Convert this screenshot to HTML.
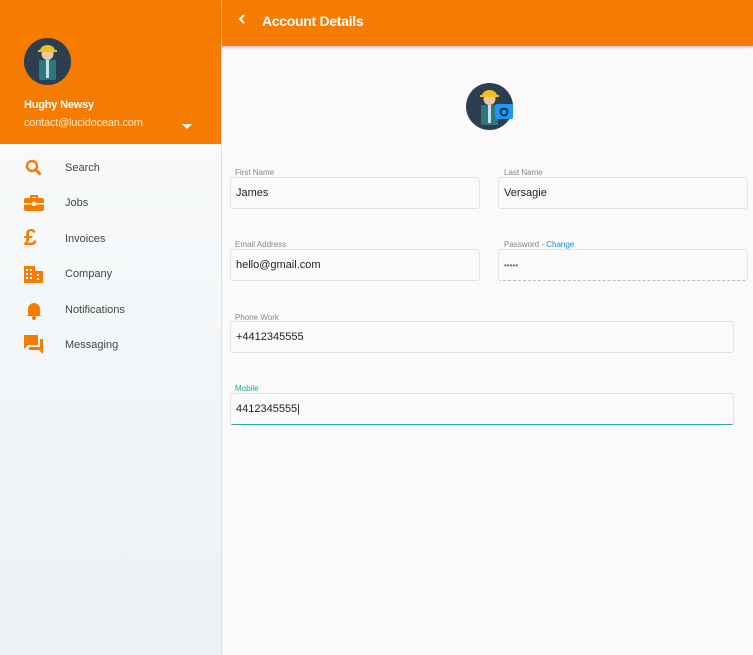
<!DOCTYPE html>
<html><head><style>
*{margin:0;padding:0;box-sizing:border-box}
body{width:753px;height:655px;overflow:hidden;font-family:"Liberation Sans",sans-serif;background:#fafafa;position:relative}
#side{position:absolute;left:0;top:0;width:222px;height:655px;background:linear-gradient(#fbfcfd,#ecf1f4);border-right:1px solid #e0e0e0}
#sh{height:144px;background:#f57c00;position:relative;color:#fff}
.av{position:absolute;border-radius:50%;background:#2c3e50;overflow:hidden}
.nm{position:absolute;left:24px;top:99px;font-size:11px;font-weight:bold;letter-spacing:-0.2px}
.em{position:absolute;left:24px;top:117px;font-size:11px;color:#fde6cc;letter-spacing:-0.2px}
.car{position:absolute;left:182px;top:124px;border-left:5px solid transparent;border-right:5px solid transparent;border-top:5px solid #fff}
.it{position:absolute;left:65px;font-size:11px;color:#444}
.ic{position:absolute;left:24px}
#top{position:absolute;left:222px;top:0;width:531px;height:46px;background:#f57c00;box-shadow:0 1px 3px rgba(0,0,0,.3);color:#fff}
#top .t{position:absolute;left:40px;top:13px;font-size:14px;font-weight:bold;letter-spacing:-0.3px}
.lb{position:absolute;font-size:8px;color:#888}
.in{position:absolute;height:32px;border:1px solid #e2e2e2;border-radius:3px;background:#fafafa;font-size:11px;color:#222;padding:9px 5px}
</style></head><body>
<div id="side">
<div id="sh">
<div class="av" style="left:24px;top:38px;width:47px;height:47px">
<svg width="47" height="47" viewBox="0 0 47 47"><rect x="15" y="22" width="17" height="20" fill="#2a7a7a"/><rect x="22" y="22" width="3" height="18" fill="#cde"/><circle cx="23.5" cy="16" r="6" fill="#e8c9a0"/><path d="M16 13a7.5 6 0 0 1 15 0z" fill="#f0c020"/><rect x="14" y="12" width="19" height="2" fill="#f0c020"/></svg></div>
<div class="nm">Hughy Newsy</div><div class="em">contact@lucidocean.com</div><div class="car"></div>
</div>
<svg class="ic" style="top:158px" width="20" height="20" viewBox="0 0 20 20"><circle cx="8" cy="8" r="5" fill="none" stroke="#f57c00" stroke-width="2.5"/><path d="M11.5 11.5l5 5" stroke="#f57c00" stroke-width="2.8"/></svg>
<div class="it" style="top:162px">Search</div>
<svg class="ic" style="top:194px" width="20" height="18" viewBox="0 0 20 18"><path d="M7 4V2h6v2" fill="none" stroke="#f57c00" stroke-width="2"/><rect x="0" y="4" width="20" height="13" rx="2" fill="#f57c00"/><rect x="0" y="9" width="20" height="1.5" fill="#fff"/><rect x="8.5" y="8" width="3" height="4" fill="#fff"/></svg>
<div class="it" style="top:197px">Jobs</div>
<div class="ic" style="top:225px;font-size:23px;font-weight:bold;color:#f57c00;line-height:24px">£</div>
<div class="it" style="top:233px">Invoices</div>
<svg class="ic" style="top:264px" width="20" height="20" viewBox="0 0 20 20"><rect x="0" y="2" width="11" height="17" fill="#f57c00"/><rect x="11" y="7" width="8" height="12" fill="#f57c00"/><g fill="#fff"><rect x="2" y="5" width="2" height="2"/><rect x="6" y="5" width="2" height="2"/><rect x="2" y="9" width="2" height="2"/><rect x="6" y="9" width="2" height="2"/><rect x="2" y="13" width="2" height="2"/><rect x="6" y="13" width="2" height="2"/><rect x="13" y="10" width="2" height="2"/><rect x="13" y="14" width="2" height="2"/></g></svg>
<div class="it" style="top:268px">Company</div>
<svg class="ic" style="top:300px" width="20" height="20" viewBox="0 0 20 20"><path d="M4 15V9a6 6 0 0 1 12 0v6l2 1H2z" fill="#f57c00"/><circle cx="10" cy="18" r="2" fill="#f57c00"/></svg>
<div class="it" style="top:304px">Notifications</div>
<svg class="ic" style="top:335px" width="20" height="20" viewBox="0 0 20 20"><path d="M0 0h14v10H4l-4 4z" fill="#f57c00"/><path d="M16 4h3v15l-4-4H5v-3h11z" fill="#f57c00"/></svg>
<div class="it" style="top:339px">Messaging</div>
</div>
<div id="top"><svg style="position:absolute;left:15px;top:13px" width="10" height="12" viewBox="0 0 10 12"><path d="M7 2L3 6l4 4" fill="none" stroke="#fff" stroke-width="2"/></svg><div class="t">Account Details</div></div>
<div class="av" style="left:466px;top:83px;width:47px;height:47px">
<svg width="47" height="47" viewBox="0 0 47 47"><rect x="15" y="22" width="17" height="20" fill="#2a7a7a"/><rect x="22" y="22" width="3" height="18" fill="#cde"/><circle cx="23.5" cy="16" r="6" fill="#e8c9a0"/><path d="M16 13a7.5 6 0 0 1 15 0z" fill="#f0c020"/><rect x="14" y="12" width="19" height="2" fill="#f0c020"/></svg></div>
<svg style="position:absolute;left:495px;top:102px" width="18" height="17" viewBox="0 0 18 17"><rect x="0" y="2" width="18" height="15" rx="2" fill="#2196f3"/><circle cx="9" cy="10" r="3.5" fill="none" stroke="#123" stroke-width="1.6"/></svg>
<div class="lb" style="left:235px;top:168px">First Name</div>
<div class="in" style="left:230px;top:177px;width:250px">James</div>
<div class="lb" style="left:504px;top:168px">Last Name</div>
<div class="in" style="left:498px;top:177px;width:250px">Versagie</div>
<div class="lb" style="left:235px;top:240px">Email Address</div>
<div class="in" style="left:230px;top:249px;width:250px">hello@gmail.com</div>
<div class="lb" style="left:504px;top:240px">Password - <span style="color:#1e88e5">Change</span></div>
<div class="in" style="left:498px;top:249px;width:250px;border-bottom:1px dashed #bbb;font-size:8px;color:#666;padding-top:11px">•••••</div>
<div class="lb" style="left:235px;top:313px">Phone Work</div>
<div class="in" style="left:230px;top:321px;width:504px">+4412345555</div>
<div class="lb" style="left:235px;top:384px;color:#26a69a">Mobile</div>
<div class="in" style="left:230px;top:393px;width:504px;border-bottom:1.5px solid #26a69a">4412345555|</div>
</body></html>
